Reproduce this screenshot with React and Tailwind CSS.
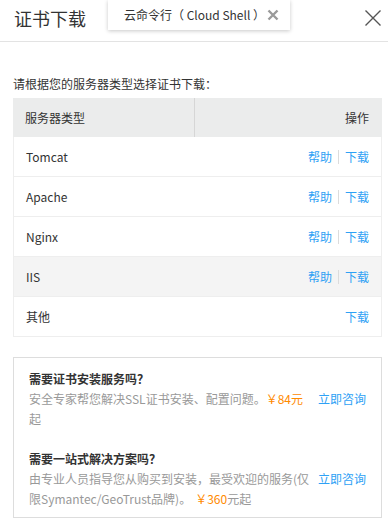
import React from "react";

const rows = [
  { name: "Tomcat", help: true },
  { name: "Apache", help: true },
  { name: "Nginx", help: true },
  { name: "IIS", help: true, hover: true },
  { name: "其他", help: false },
];

function Links({ help }) {
  return (
    <div className="flex items-center text-[12px] text-[#2ea1f5]">
      {help && (
        <>
          <span>帮助</span>
          <span className="mx-[6px] h-[14px] w-px bg-[#dcdcdc]" />
        </>
      )}
      <span>下载</span>
    </div>
  );
}

export default function App() {
  return (
    <div
      className="relative w-[388px] h-[520px] overflow-hidden bg-white text-[#333]"
      style={{ fontFamily: '"Noto Sans CJK SC", "Noto Sans", sans-serif' }}
    >
      {/* header */}
      <div className="flex h-[42px] items-start justify-between border-b border-[#e3e3e3] pl-[14px] pr-[5px] pt-[6px]">
        <h1 className="text-[18px] leading-[24px] text-[#333]">证书下载</h1>
        <button className="mt-[2px] p-[1px] text-[#555]">
          <svg width="18" height="18" viewBox="0 0 18 18" fill="none" stroke="currentColor" strokeWidth="1.4">
            <path d="M1.5 1.5 L16.5 16.5 M16.5 1.5 L1.5 16.5" />
          </svg>
        </button>
      </div>

      {/* floating tab */}
      <div className="absolute left-[108px] top-0 flex h-[30px] w-[182px] items-center justify-between bg-white pl-[16px] pr-[11px] shadow-[0_1px_4px_rgba(0,0,0,0.22)]">
        <span className="text-[12px] leading-[16px] text-[#333]">云命令行（ Cloud Shell ）</span>
        <svg width="12" height="12" viewBox="0 0 12 12" fill="none" stroke="#9a9a9a" strokeWidth="2.4">
          <path d="M1.5 1.5 L10.5 10.5 M10.5 1.5 L1.5 10.5" />
        </svg>
      </div>

      <div className="px-[13px] pr-[6px]">
        <p className="mt-[32px] text-[12px] leading-[20px] text-[#333]">请根据您的服务器类型选择证书下载：</p>

        {/* table */}
        <div className="mt-[4px] w-[369px] text-[12px]">
          <div className="flex h-[39px] bg-[#ebecec]">
            <div className="flex w-[182px] items-center border-r border-[#d6d6d6] pl-[12px]">服务器类型</div>
            <div className="flex flex-1 items-center justify-end pr-[13px]">操作</div>
          </div>
          {rows.map((r) => (
            <div
              key={r.name}
              className={`flex h-[40px] items-center justify-between border-x border-b border-[#eeeeee] pl-[12px] pr-[12px] ${r.hover ? "bg-[#f4f4f4]" : "bg-white"}`}
            >
              <span className="text-[#333]">{r.name}</span>
              <Links help={r.help} />
            </div>
          ))}
        </div>

        {/* service box */}
        <div className="mt-[20px] w-[369px] border border-[#dddddd] px-[15px] pb-[8px] pt-[11px] text-[12px] leading-[20px]">
          <div className="font-bold text-[#333]">需要证书安装服务吗？</div>
          <div className="flex gap-[8px]">
            <p className="flex-1 text-[#999]">
              安全专家帮您解决SSL证书安装、配置问题。<span className="text-[#ff8a00]">￥84元</span>起
            </p>
            <span className="text-[#2ea1f5]">立即咨询</span>
          </div>

          <div className="mt-[20px] font-bold text-[#333]">需要一站式解决方案吗？</div>
          <div className="flex gap-[8px]">
            <div className="flex-1 text-[#999]">
              <div>由专业人员指导您从购买到安装，最受欢迎的服务(仅</div>
              <div>
                限Symantec/GeoTrust品牌)。<span className="ml-[4px] text-[#ff8a00]">￥360</span>元起
              </div>
            </div>
            <span className="text-[#2ea1f5]">立即咨询</span>
          </div>
        </div>
      </div>
    </div>
  );
}
